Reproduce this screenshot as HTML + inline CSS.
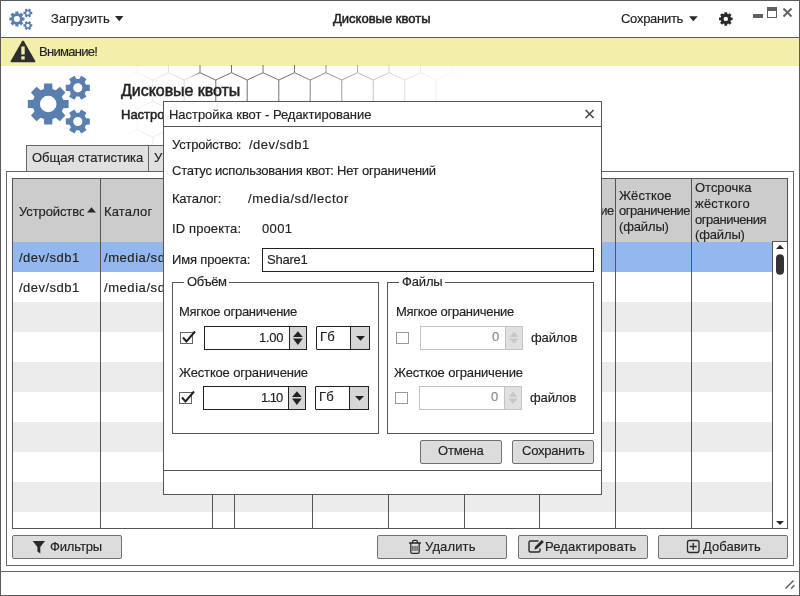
<!DOCTYPE html>
<html><head><meta charset="utf-8"><style>
html,body{margin:0;padding:0;}
body{width:800px;height:596px;position:relative;overflow:hidden;background:#fff;font-family:"Liberation Sans", sans-serif;color:#222;}
.t{position:absolute;white-space:pre;will-change:transform;-webkit-text-stroke:0.15px currentColor;}
.a{position:absolute;box-sizing:border-box;}
.btn{position:absolute;box-sizing:border-box;background:#dcdcdc;border:1px solid #707070;border-radius:2px;}
</style></head><body>
<!-- outer frame -->
<div class="a" style="left:0;top:0;width:800px;height:596px;border:1px solid #5a5a5a;"></div>
<div class="a" style="left:0;top:37px;width:800px;height:1px;background:#5a5a5a;"></div>
<div class="a" style="left:1px;top:38px;width:798px;height:28px;background:#f4eeab;"></div>
<svg class="a" style="left:0;top:0" width="800" height="596" viewBox="0 0 800 596">
  <defs>
    <linearGradient id="fade" gradientUnits="userSpaceOnUse" x1="120" y1="0" x2="470" y2="0">
      <stop offset="0.000" stop-color="#fff" stop-opacity="0"/>
      <stop offset="0.086" stop-color="#fff" stop-opacity="0.1"/>
      <stop offset="0.200" stop-color="#fff" stop-opacity="0.22"/>
      <stop offset="0.229" stop-color="#fff" stop-opacity="0.8"/>
      <stop offset="0.486" stop-color="#fff" stop-opacity="0.8"/>
      <stop offset="0.629" stop-color="#fff" stop-opacity="0.55"/>
      <stop offset="0.743" stop-color="#fff" stop-opacity="0.3"/>
      <stop offset="0.857" stop-color="#fff" stop-opacity="0.1"/>
      <stop offset="0.971" stop-color="#fff" stop-opacity="0.02"/>
      <stop offset="1.000" stop-color="#fff" stop-opacity="0"/>
    </linearGradient>
    <linearGradient id="fadev" x1="0" y1="0" x2="0" y2="1">
      <stop offset="0" stop-color="#fff" stop-opacity="1"/>
      <stop offset="0.4" stop-color="#fff" stop-opacity="0.7"/>
      <stop offset="1" stop-color="#fff" stop-opacity="0.0"/>
    </linearGradient>
    <mask id="m1"><rect x="120" y="65" width="350" height="110" fill="url(#fade)"/></mask>
    <clipPath id="c1"><rect x="120" y="65" width="350" height="106"/></clipPath>
  </defs>
  <g clip-path="url(#c1)" mask="url(#m1)"><path d="M58.2,22.8L74.0,15.5M74.0,15.5L89.8,22.8M58.2,22.8L58.2,44.1M89.8,22.8L105.5,15.5M105.5,15.5L121.2,22.8M89.8,22.8L89.8,44.1M121.2,22.8L137.0,15.5M137.0,15.5L152.8,22.8M121.2,22.8L121.2,44.1M152.8,22.8L168.5,15.5M168.5,15.5L184.2,22.8M152.8,22.8L152.8,44.1M184.2,22.8L200.0,15.5M200.0,15.5L215.8,22.8M184.2,22.8L184.2,44.1M215.8,22.8L231.5,15.5M231.5,15.5L247.2,22.8M215.8,22.8L215.8,44.1M247.2,22.8L263.0,15.5M263.0,15.5L278.8,22.8M247.2,22.8L247.2,44.1M278.8,22.8L294.5,15.5M294.5,15.5L310.2,22.8M278.8,22.8L278.8,44.1M310.2,22.8L326.0,15.5M326.0,15.5L341.8,22.8M310.2,22.8L310.2,44.1M341.8,22.8L357.5,15.5M357.5,15.5L373.2,22.8M341.8,22.8L341.8,44.1M373.2,22.8L389.0,15.5M389.0,15.5L404.8,22.8M373.2,22.8L373.2,44.1M404.8,22.8L420.5,15.5M420.5,15.5L436.2,22.8M404.8,22.8L404.8,44.1M436.2,22.8L452.0,15.5M452.0,15.5L467.8,22.8M436.2,22.8L436.2,44.1M467.8,22.8L483.5,15.5M483.5,15.5L499.2,22.8M467.8,22.8L467.8,44.1M499.2,22.8L515.0,15.5M515.0,15.5L530.8,22.8M499.2,22.8L499.2,44.1M530.8,22.8L546.5,15.5M546.5,15.5L562.2,22.8M530.8,22.8L530.8,44.1M562.2,22.8L578.0,15.5M578.0,15.5L593.8,22.8M562.2,22.8L562.2,44.1M593.8,22.8L609.5,15.5M609.5,15.5L625.2,22.8M593.8,22.8L593.8,44.1M74.0,51.4L89.8,44.1M89.8,44.1L105.5,51.4M74.0,51.4L74.0,72.7M105.5,51.4L121.2,44.1M121.2,44.1L137.0,51.4M105.5,51.4L105.5,72.7M137.0,51.4L152.8,44.1M152.8,44.1L168.5,51.4M137.0,51.4L137.0,72.7M168.5,51.4L184.2,44.1M184.2,44.1L200.0,51.4M168.5,51.4L168.5,72.7M200.0,51.4L215.8,44.1M215.8,44.1L231.5,51.4M200.0,51.4L200.0,72.7M231.5,51.4L247.2,44.1M247.2,44.1L263.0,51.4M231.5,51.4L231.5,72.7M263.0,51.4L278.8,44.1M278.8,44.1L294.5,51.4M263.0,51.4L263.0,72.7M294.5,51.4L310.2,44.1M310.2,44.1L326.0,51.4M294.5,51.4L294.5,72.7M326.0,51.4L341.8,44.1M341.8,44.1L357.5,51.4M326.0,51.4L326.0,72.7M357.5,51.4L373.2,44.1M373.2,44.1L389.0,51.4M357.5,51.4L357.5,72.7M389.0,51.4L404.8,44.1M404.8,44.1L420.5,51.4M389.0,51.4L389.0,72.7M420.5,51.4L436.2,44.1M436.2,44.1L452.0,51.4M420.5,51.4L420.5,72.7M452.0,51.4L467.8,44.1M467.8,44.1L483.5,51.4M452.0,51.4L452.0,72.7M483.5,51.4L499.2,44.1M499.2,44.1L515.0,51.4M483.5,51.4L483.5,72.7M515.0,51.4L530.8,44.1M530.8,44.1L546.5,51.4M515.0,51.4L515.0,72.7M546.5,51.4L562.2,44.1M562.2,44.1L578.0,51.4M546.5,51.4L546.5,72.7M578.0,51.4L593.8,44.1M593.8,44.1L609.5,51.4M578.0,51.4L578.0,72.7M609.5,51.4L625.2,44.1M625.2,44.1L641.0,51.4M609.5,51.4L609.5,72.7M58.2,80.0L74.0,72.7M74.0,72.7L89.8,80.0M58.2,80.0L58.2,101.3M89.8,80.0L105.5,72.7M105.5,72.7L121.2,80.0M89.8,80.0L89.8,101.3M121.2,80.0L137.0,72.7M137.0,72.7L152.8,80.0M121.2,80.0L121.2,101.3M152.8,80.0L168.5,72.7M168.5,72.7L184.2,80.0M152.8,80.0L152.8,101.3M184.2,80.0L200.0,72.7M200.0,72.7L215.8,80.0M184.2,80.0L184.2,101.3M215.8,80.0L231.5,72.7M231.5,72.7L247.2,80.0M215.8,80.0L215.8,101.3M247.2,80.0L263.0,72.7M263.0,72.7L278.8,80.0M247.2,80.0L247.2,101.3M278.8,80.0L294.5,72.7M294.5,72.7L310.2,80.0M278.8,80.0L278.8,101.3M310.2,80.0L326.0,72.7M326.0,72.7L341.8,80.0M310.2,80.0L310.2,101.3M341.8,80.0L357.5,72.7M357.5,72.7L373.2,80.0M341.8,80.0L341.8,101.3M373.2,80.0L389.0,72.7M389.0,72.7L404.8,80.0M373.2,80.0L373.2,101.3M404.8,80.0L420.5,72.7M420.5,72.7L436.2,80.0M404.8,80.0L404.8,101.3M436.2,80.0L452.0,72.7M452.0,72.7L467.8,80.0M436.2,80.0L436.2,101.3M467.8,80.0L483.5,72.7M483.5,72.7L499.2,80.0M467.8,80.0L467.8,101.3M499.2,80.0L515.0,72.7M515.0,72.7L530.8,80.0M499.2,80.0L499.2,101.3M530.8,80.0L546.5,72.7M546.5,72.7L562.2,80.0M530.8,80.0L530.8,101.3M562.2,80.0L578.0,72.7M578.0,72.7L593.8,80.0M562.2,80.0L562.2,101.3M593.8,80.0L609.5,72.7M609.5,72.7L625.2,80.0M593.8,80.0L593.8,101.3M74.0,108.6L89.8,101.3M89.8,101.3L105.5,108.6M74.0,108.6L74.0,129.9M105.5,108.6L121.2,101.3M121.2,101.3L137.0,108.6M105.5,108.6L105.5,129.9M137.0,108.6L152.8,101.3M152.8,101.3L168.5,108.6M137.0,108.6L137.0,129.9M168.5,108.6L184.2,101.3M184.2,101.3L200.0,108.6M168.5,108.6L168.5,129.9M200.0,108.6L215.8,101.3M215.8,101.3L231.5,108.6M200.0,108.6L200.0,129.9M231.5,108.6L247.2,101.3M247.2,101.3L263.0,108.6M231.5,108.6L231.5,129.9M263.0,108.6L278.8,101.3M278.8,101.3L294.5,108.6M263.0,108.6L263.0,129.9M294.5,108.6L310.2,101.3M310.2,101.3L326.0,108.6M294.5,108.6L294.5,129.9M326.0,108.6L341.8,101.3M341.8,101.3L357.5,108.6M326.0,108.6L326.0,129.9M357.5,108.6L373.2,101.3M373.2,101.3L389.0,108.6M357.5,108.6L357.5,129.9M389.0,108.6L404.8,101.3M404.8,101.3L420.5,108.6M389.0,108.6L389.0,129.9M420.5,108.6L436.2,101.3M436.2,101.3L452.0,108.6M420.5,108.6L420.5,129.9M452.0,108.6L467.8,101.3M467.8,101.3L483.5,108.6M452.0,108.6L452.0,129.9M483.5,108.6L499.2,101.3M499.2,101.3L515.0,108.6M483.5,108.6L483.5,129.9M515.0,108.6L530.8,101.3M530.8,101.3L546.5,108.6M515.0,108.6L515.0,129.9M546.5,108.6L562.2,101.3M562.2,101.3L578.0,108.6M546.5,108.6L546.5,129.9M578.0,108.6L593.8,101.3M593.8,101.3L609.5,108.6M578.0,108.6L578.0,129.9M609.5,108.6L625.2,101.3M625.2,101.3L641.0,108.6M609.5,108.6L609.5,129.9M58.2,137.2L74.0,129.9M74.0,129.9L89.8,137.2M58.2,137.2L58.2,158.5M89.8,137.2L105.5,129.9M105.5,129.9L121.2,137.2M89.8,137.2L89.8,158.5M121.2,137.2L137.0,129.9M137.0,129.9L152.8,137.2M121.2,137.2L121.2,158.5M152.8,137.2L168.5,129.9M168.5,129.9L184.2,137.2M152.8,137.2L152.8,158.5M184.2,137.2L200.0,129.9M200.0,129.9L215.8,137.2M184.2,137.2L184.2,158.5M215.8,137.2L231.5,129.9M231.5,129.9L247.2,137.2M215.8,137.2L215.8,158.5M247.2,137.2L263.0,129.9M263.0,129.9L278.8,137.2M247.2,137.2L247.2,158.5M278.8,137.2L294.5,129.9M294.5,129.9L310.2,137.2M278.8,137.2L278.8,158.5M310.2,137.2L326.0,129.9M326.0,129.9L341.8,137.2M310.2,137.2L310.2,158.5M341.8,137.2L357.5,129.9M357.5,129.9L373.2,137.2M341.8,137.2L341.8,158.5M373.2,137.2L389.0,129.9M389.0,129.9L404.8,137.2M373.2,137.2L373.2,158.5M404.8,137.2L420.5,129.9M420.5,129.9L436.2,137.2M404.8,137.2L404.8,158.5M436.2,137.2L452.0,129.9M452.0,129.9L467.8,137.2M436.2,137.2L436.2,158.5M467.8,137.2L483.5,129.9M483.5,129.9L499.2,137.2M467.8,137.2L467.8,158.5M499.2,137.2L515.0,129.9M515.0,129.9L530.8,137.2M499.2,137.2L499.2,158.5M530.8,137.2L546.5,129.9M546.5,129.9L562.2,137.2M530.8,137.2L530.8,158.5M562.2,137.2L578.0,129.9M578.0,129.9L593.8,137.2M562.2,137.2L562.2,158.5M593.8,137.2L609.5,129.9M609.5,129.9L625.2,137.2M593.8,137.2L593.8,158.5M74.0,165.8L89.8,158.5M89.8,158.5L105.5,165.8M74.0,165.8L74.0,187.1M105.5,165.8L121.2,158.5M121.2,158.5L137.0,165.8M105.5,165.8L105.5,187.1M137.0,165.8L152.8,158.5M152.8,158.5L168.5,165.8M137.0,165.8L137.0,187.1M168.5,165.8L184.2,158.5M184.2,158.5L200.0,165.8M168.5,165.8L168.5,187.1M200.0,165.8L215.8,158.5M215.8,158.5L231.5,165.8M200.0,165.8L200.0,187.1M231.5,165.8L247.2,158.5M247.2,158.5L263.0,165.8M231.5,165.8L231.5,187.1M263.0,165.8L278.8,158.5M278.8,158.5L294.5,165.8M263.0,165.8L263.0,187.1M294.5,165.8L310.2,158.5M310.2,158.5L326.0,165.8M294.5,165.8L294.5,187.1M326.0,165.8L341.8,158.5M341.8,158.5L357.5,165.8M326.0,165.8L326.0,187.1M357.5,165.8L373.2,158.5M373.2,158.5L389.0,165.8M357.5,165.8L357.5,187.1M389.0,165.8L404.8,158.5M404.8,158.5L420.5,165.8M389.0,165.8L389.0,187.1M420.5,165.8L436.2,158.5M436.2,158.5L452.0,165.8M420.5,165.8L420.5,187.1M452.0,165.8L467.8,158.5M467.8,158.5L483.5,165.8M452.0,165.8L452.0,187.1M483.5,165.8L499.2,158.5M499.2,158.5L515.0,165.8M483.5,165.8L483.5,187.1M515.0,165.8L530.8,158.5M530.8,158.5L546.5,165.8M515.0,165.8L515.0,187.1M546.5,165.8L562.2,158.5M562.2,158.5L578.0,165.8M546.5,165.8L546.5,187.1M578.0,165.8L593.8,158.5M593.8,158.5L609.5,165.8M578.0,165.8L578.0,187.1M609.5,165.8L625.2,158.5M625.2,158.5L641.0,165.8M609.5,165.8L609.5,187.1" stroke="#3a3a3a" stroke-width="0.9" fill="none"/></g>
  <g fill="#5a7fae"><path d="M22.45,17.40 L24.45,17.51 L24.45,20.49 L22.45,20.60 L21.95,21.79 L23.29,23.29 L21.19,25.39 L19.69,24.05 L18.50,24.55 L18.39,26.55 L15.41,26.55 L15.30,24.55 L14.11,24.05 L12.61,25.39 L10.51,23.29 L11.85,21.79 L11.35,20.60 L9.35,20.49 L9.35,17.51 L11.35,17.40 L11.85,16.21 L10.51,14.71 L12.61,12.61 L14.11,13.95 L15.30,13.45 L15.41,11.45 L18.39,11.45 L18.50,13.45 L19.69,13.95 L21.19,12.61 L23.29,14.71 L21.95,16.21Z M19.97,19.00 A3.07,3.07 0 1,0 13.83,19.00 A3.07,3.07 0 1,0 19.97,19.00Z" fill-rule="evenodd"/><path d="M30.94,11.84 L32.30,11.87 L32.30,14.15 L30.94,14.17 L30.41,15.10 L31.06,16.28 L29.09,17.42 L28.39,16.27 L27.32,16.27 L26.62,17.42 L24.64,16.28 L25.30,15.10 L24.76,14.17 L23.41,14.15 L23.41,11.87 L24.76,11.84 L25.30,10.91 L24.64,9.73 L26.62,8.59 L27.32,9.75 L28.39,9.75 L29.09,8.59 L31.06,9.73 L30.41,10.91Z M29.55,13.01 A1.70,1.70 0 1,0 26.15,13.01 A1.70,1.70 0 1,0 29.55,13.01Z" fill-rule="evenodd"/><path d="M30.94,24.31 L32.30,24.33 L32.30,26.62 L30.94,26.64 L30.41,27.57 L31.06,28.75 L29.09,29.89 L28.39,28.73 L27.32,28.73 L26.62,29.89 L24.64,28.75 L25.30,27.57 L24.76,26.64 L23.41,26.62 L23.41,24.33 L24.76,24.31 L25.30,23.38 L24.64,22.20 L26.62,21.06 L27.32,22.22 L28.39,22.22 L29.09,21.06 L31.06,22.20 L30.41,23.38Z M29.55,25.48 A1.70,1.70 0 1,0 26.15,25.48 A1.70,1.70 0 1,0 29.55,25.48Z" fill-rule="evenodd"/></g>
  <g fill="#5a7fae"><path d="M63.19,99.69 L68.61,99.97 L68.61,108.03 L63.19,108.31 L61.85,111.55 L65.48,115.58 L59.78,121.28 L55.75,117.65 L52.51,118.99 L52.23,124.41 L44.17,124.41 L43.89,118.99 L40.65,117.65 L36.62,121.28 L30.92,115.58 L34.55,111.55 L33.21,108.31 L27.79,108.03 L27.79,99.97 L33.21,99.69 L34.55,96.45 L30.92,92.42 L36.62,86.72 L40.65,90.35 L43.89,89.01 L44.17,83.59 L52.23,83.59 L52.51,89.01 L55.75,90.35 L59.78,86.72 L65.48,92.42 L61.85,96.45Z M56.50,104.00 A8.30,8.30 0 1,0 39.90,104.00 A8.30,8.30 0 1,0 56.50,104.00Z" fill-rule="evenodd"/><path d="M86.15,84.64 L89.81,84.72 L89.81,90.88 L86.15,90.96 L84.71,93.45 L86.48,96.66 L81.13,99.74 L79.24,96.61 L76.36,96.61 L74.47,99.74 L69.12,96.66 L70.89,93.45 L69.45,90.96 L65.79,90.88 L65.79,84.72 L69.45,84.64 L70.89,82.15 L69.12,78.94 L74.47,75.86 L76.36,78.99 L79.24,78.99 L81.13,75.86 L86.48,78.94 L84.71,82.15Z M82.40,87.80 A4.60,4.60 0 1,0 73.20,87.80 A4.60,4.60 0 1,0 82.40,87.80Z" fill-rule="evenodd"/><path d="M86.15,118.34 L89.81,118.42 L89.81,124.58 L86.15,124.66 L84.71,127.15 L86.48,130.36 L81.13,133.44 L79.24,130.31 L76.36,130.31 L74.47,133.44 L69.12,130.36 L70.89,127.15 L69.45,124.66 L65.79,124.58 L65.79,118.42 L69.45,118.34 L70.89,115.85 L69.12,112.64 L74.47,109.56 L76.36,112.69 L79.24,112.69 L81.13,109.56 L86.48,112.64 L84.71,115.85Z M82.40,121.50 A4.60,4.60 0 1,0 73.20,121.50 A4.60,4.60 0 1,0 82.40,121.50Z" fill-rule="evenodd"/></g>
  <path d="M730.84,17.45 L732.57,17.56 L732.57,20.24 L730.84,20.35 L730.39,21.44 L731.53,22.74 L729.64,24.63 L728.34,23.49 L727.25,23.94 L727.14,25.67 L724.46,25.67 L724.35,23.94 L723.26,23.49 L721.96,24.63 L720.07,22.74 L721.21,21.44 L720.76,20.35 L719.03,20.24 L719.03,17.56 L720.76,17.45 L721.21,16.36 L720.07,15.06 L721.96,13.17 L723.26,14.31 L724.35,13.86 L724.46,12.13 L727.14,12.13 L727.25,13.86 L728.34,14.31 L729.64,13.17 L731.53,15.06 L730.39,16.36Z M728.00,18.90 A2.20,2.20 0 1,0 723.60,18.90 A2.20,2.20 0 1,0 728.00,18.90Z" fill="#2a2a2a" fill-rule="evenodd"/>
  <!-- warning triangle -->
  <path d="M22,41.2 Q23,39.8 24,41.2 L35.3,61 Q35.9,62.3 34.5,62.3 L11.5,62.3 Q10.1,62.3 10.7,61 Z" fill="#2e2e2e"/>
  <rect x="21.3" y="46.5" width="3.4" height="8" fill="#f4eeab"/>
  <rect x="21.3" y="56.3" width="3.4" height="3.2" fill="#f4eeab"/>
  <!-- dropdown triangles -->
  <path d="M115,16 L123.5,16 L119.25,21.2Z" fill="#2a2a2a"/>
  <path d="M689,16.2 L697.7,16.2 L693.35,21.2Z" fill="#2a2a2a"/>
  <!-- window controls -->
  <rect x="753" y="14" width="10" height="4" fill="#606060"/>
  <rect x="767.5" y="7.5" width="9" height="10" fill="none" stroke="#606060" stroke-width="1"/>
  <rect x="767" y="7" width="10" height="4" fill="#606060"/>
  <path d="M783.5,8.5 L791.5,16.5 M791.5,8.5 L783.5,16.5" stroke="#606060" stroke-width="1.8"/>
</svg>
<!-- tab -->
<div class="a" style="left:26px;top:145px;width:123px;height:27px;background:#e0e0e0;border:1px solid #666;"></div>
<div class="a" style="left:148px;top:145px;width:60px;height:27px;background:#e0e0e0;border:1px solid #666;"></div>
<!-- panel -->
<div class="a" style="left:6px;top:171px;width:788px;height:395px;border:1px solid #666;background:#fff;"></div>
<!-- table -->
<div class="a" style="left:12px;top:178px;width:776px;height:351px;border:1px solid #555;background:#fff;overflow:hidden;">
  <div class="a" style="left:0;top:0;width:774px;height:63px;background:#cccccc;"></div>
  <div class="a" style="left:0;top:63px;width:774px;height:30px;background:#93b8ef;"></div>
  <div class="a" style="left:0;top:123px;width:759px;height:30px;background:#ececec;"></div>
  <div class="a" style="left:0;top:183px;width:759px;height:30px;background:#ececec;"></div>
  <div class="a" style="left:0;top:243px;width:759px;height:30px;background:#ececec;"></div>
  <div class="a" style="left:0;top:303px;width:759px;height:30px;background:#ececec;"></div>
</div>
<!-- column lines -->
<div class="a" style="left:100px;top:179px;width:1px;height:349px;background:#555;"></div>
<div class="a" style="left:212px;top:179px;width:1px;height:349px;background:#555;"></div>
<div class="a" style="left:234px;top:179px;width:1px;height:349px;background:#555;"></div>
<div class="a" style="left:312px;top:179px;width:1px;height:349px;background:#555;"></div>
<div class="a" style="left:388px;top:179px;width:1px;height:349px;background:#555;"></div>
<div class="a" style="left:464px;top:179px;width:1px;height:349px;background:#555;"></div>
<div class="a" style="left:539px;top:179px;width:1px;height:349px;background:#555;"></div>
<div class="a" style="left:615px;top:179px;width:1px;height:349px;background:#555;"></div>
<div class="a" style="left:691px;top:179px;width:1px;height:349px;background:#555;"></div>
<!-- scrollbar -->
<div class="a" style="left:772px;top:241px;width:16px;height:288px;border:1px solid #555;background:#fff;"></div>
<svg class="a" style="left:0;top:0" width="800" height="596">
  <path d="M776,249 L784,249 L780,244.8Z" fill="#2a2a2a"/>
  <rect x="776" y="254.2" width="8" height="20.6" rx="4" fill="#333"/>
  <path d="M776,521 L784,521 L780,525Z" fill="#2a2a2a"/>
  <path d="M87,212.6 L96,212.6 L91.5,207.2Z" fill="#2a2a2a"/>
</svg>
<!-- status bar -->
<div class="a" style="left:0;top:571px;width:800px;height:1px;background:#666;"></div>
<svg class="a" style="left:0;top:0" width="800" height="596">
  <path d="M785.5,588.5 L793.5,580.5 M791.2,588.5 L794.5,585.2" stroke="#555" stroke-width="1.3"/>
</svg>
<!-- buttons -->
<div class="btn" style="left:12px;top:535px;width:110px;height:24px;"></div>
<div class="btn" style="left:377px;top:535px;width:130px;height:24px;"></div>
<div class="btn" style="left:518px;top:535px;width:130px;height:24px;"></div>
<div class="btn" style="left:658px;top:535px;width:130px;height:24px;"></div>
<svg class="a" style="left:0;top:0" width="800" height="596">
  <!-- funnel -->
  <path d="M32.7,541 L45,541 L40.3,547 L40.3,553.4 L37.4,551.5 L37.4,547 Z" fill="#2a2a2a"/>
  <!-- trash -->
  <g stroke="#2a2a2a" stroke-width="1.3" fill="none" stroke-linecap="round">
    <path d="M409.5,543 L420.5,543"/>
    <path d="M412.6,542.8 L412.6,541.6 Q412.6,540.3 413.9,540.3 L416.1,540.3 Q417.4,540.3 417.4,541.6 L417.4,542.8"/>
    <path d="M410.8,543.5 L410.8,552 Q410.8,553.3 412.1,553.3 L417.9,553.3 Q419.2,553.3 419.2,552 L419.2,543.5"/>
    <path d="M412.9,546.3 L412.9,550.5 M415,546.3 L415,550.5 M417.1,546.3 L417.1,550.5" stroke-width="1"/>
  </g>
  <!-- edit -->
  <path d="M538.5,541 L530.5,541 Q529,541 529,542.5 L529,550.5 Q529,552 530.5,552 L538.5,552 Q540,552 540,550.5 L540,548.5" stroke="#2a2a2a" stroke-width="1.4" fill="none"/>
  <path d="M541.8,540 L543.8,542 L537.3,548.5 L534.3,549.8 L535.3,546.5 Z" fill="#2a2a2a"/>
  <!-- plus box -->
  <rect x="687.5" y="540.5" width="11.5" height="12" rx="2" fill="none" stroke="#2a2a2a" stroke-width="1.3"/>
  <path d="M693.25,543 L693.25,550 M689.8,546.5 L696.7,546.5" stroke="#2a2a2a" stroke-width="1.3"/>
</svg>
<!-- header clip for first col text -->
<div class="a" style="left:13px;top:179px;width:71px;height:62px;overflow:hidden;">
  <div class="t" style="left:5.70px;top:25.70px;font-size:13px;line-height:13px;letter-spacing:-0.1px;">Устройство</div>
</div>
<div class="t" style="left:50.70px;top:11.50px;font-size:13px;line-height:13px;letter-spacing:-0.084px;">Загрузить</div>
<div class="t" style="left:333.40px;top:12.20px;font-size:13px;line-height:13px;-webkit-text-stroke:0.5px #222;letter-spacing:0.013px;">Дисковые квоты</div>
<div class="t" style="left:620.90px;top:11.70px;font-size:13px;line-height:13px;letter-spacing:-0.279px;">Сохранить</div>
<div class="t" style="left:38.95px;top:44.60px;font-size:13px;line-height:13px;letter-spacing:-0.718px;">Внимание!</div>
<div class="t" style="left:120.92px;top:82.86px;font-size:16px;line-height:16px;-webkit-text-stroke:0.5px #222;letter-spacing:-0.044px;">Дисковые квоты</div>
<div class="t" style="left:121.20px;top:107.60px;font-size:13px;line-height:13px;-webkit-text-stroke:0.5px #222;">Настройка квот</div>
<div class="t" style="left:31.50px;top:151.20px;font-size:13px;line-height:13px;letter-spacing:-0.014px;">Общая статистика</div>
<div class="t" style="left:153.70px;top:151.20px;font-size:13px;line-height:13px;">У</div>
<div class="t" style="left:103.70px;top:205.00px;font-size:13px;line-height:13px;letter-spacing:0.162px;">Каталог</div>
<div class="t" style="left:543.20px;top:204.20px;font-size:13px;line-height:13px;letter-spacing:-0.541px;">ограничение</div>
<div class="t" style="left:618.90px;top:188.70px;font-size:13px;line-height:13px;letter-spacing:0.088px;">Жёсткое</div>
<div class="t" style="left:618.90px;top:204.20px;font-size:13px;line-height:13px;letter-spacing:-0.495px;">ограничение</div>
<div class="t" style="left:618.90px;top:219.70px;font-size:13px;line-height:13px;letter-spacing:-0.140px;">(файлы)</div>
<div class="t" style="left:694.90px;top:180.60px;font-size:13px;line-height:13px;letter-spacing:-0.022px;">Отсрочка</div>
<div class="t" style="left:694.90px;top:196.50px;font-size:13px;line-height:13px;letter-spacing:0.220px;">жёсткого</div>
<div class="t" style="left:694.90px;top:212.50px;font-size:13px;line-height:13px;letter-spacing:-0.478px;">ограничения</div>
<div class="t" style="left:694.90px;top:228.00px;font-size:13px;line-height:13px;letter-spacing:-0.140px;">(файлы)</div>
<div class="t" style="left:18.95px;top:250.60px;font-size:13px;line-height:13px;letter-spacing:0.469px;">/dev/sdb1</div>
<div class="t" style="left:103.70px;top:250.60px;font-size:13px;line-height:13px;letter-spacing:0.565px;">/media/sd/lector</div>
<div class="t" style="left:18.95px;top:280.60px;font-size:13px;line-height:13px;letter-spacing:0.469px;">/dev/sdb1</div>
<div class="t" style="left:103.70px;top:280.60px;font-size:13px;line-height:13px;letter-spacing:0.565px;">/media/sd/lector</div>
<div class="t" style="left:49.95px;top:539.75px;font-size:13px;line-height:13px;letter-spacing:-0.138px;">Фильтры</div>
<div class="t" style="left:425.20px;top:539.75px;font-size:13px;line-height:13px;letter-spacing:0.137px;">Удалить</div>
<div class="t" style="left:545.40px;top:539.75px;font-size:13px;line-height:13px;letter-spacing:0.130px;">Редактировать</div>
<div class="t" style="left:703.10px;top:539.75px;font-size:13px;line-height:13px;letter-spacing:0.031px;">Добавить</div>
<!-- dialog -->
<div class="a" style="left:163px;top:101px;width:439px;height:394px;border:1px solid #555;background:#fff;"></div>
<div class="a" style="left:164px;top:126px;width:437px;height:1px;background:#555;"></div>
<div class="a" style="left:164px;top:470px;width:437px;height:1px;background:#555;"></div>
<svg class="a" style="left:0;top:0" width="800" height="596">
  <path d="M585.6,110 L593.6,118 M593.6,110 L585.6,118" stroke="#4a4a4a" stroke-width="1.7"/>
</svg>
<div class="a" style="left:262px;top:248px;width:332px;height:24px;border:1px solid #222;"></div>
<!-- group boxes -->
<div class="a" style="left:172px;top:282px;width:207px;height:152px;border:1px solid #555;"></div>
<div class="a" style="left:184px;top:278px;width:45px;height:8px;background:#fff;"></div>
<div class="a" style="left:387px;top:282px;width:207px;height:152px;border:1px solid #555;"></div>
<div class="a" style="left:399px;top:278px;width:46px;height:8px;background:#fff;"></div>
<!-- spinboxes -->
<div class="a" style="left:204px;top:326px;width:103px;height:24px;border:1px solid #222;background:#fff;"></div>
<div class="a" style="left:289px;top:326px;width:18px;height:24px;border:1px solid #222;background:#d6d6d6;"></div>
<div class="a" style="left:316px;top:326px;width:54px;height:24px;border:1px solid #222;border-radius:1px;background:#fff;"></div>
<div class="a" style="left:350px;top:326px;width:20px;height:24px;border:1px solid #222;background:#d6d6d6;"></div>
<div class="a" style="left:203px;top:386px;width:103px;height:24px;border:1px solid #222;background:#fff;"></div>
<div class="a" style="left:288px;top:386px;width:18px;height:24px;border:1px solid #222;background:#d6d6d6;"></div>
<div class="a" style="left:315px;top:386px;width:54px;height:24px;border:1px solid #222;border-radius:1px;background:#fff;"></div>
<div class="a" style="left:349px;top:386px;width:20px;height:24px;border:1px solid #222;background:#d6d6d6;"></div>
<div class="a" style="left:420px;top:326px;width:103px;height:24px;border:1px solid #c4c4c4;background:#fff;"></div>
<div class="a" style="left:505px;top:326px;width:18px;height:24px;border:1px solid #c4c4c4;background:#e0e0e0;"></div>
<div class="a" style="left:419px;top:386px;width:103px;height:24px;border:1px solid #c4c4c4;background:#fff;"></div>
<div class="a" style="left:504px;top:386px;width:18px;height:24px;border:1px solid #c4c4c4;background:#e0e0e0;"></div>
<!-- checkboxes -->
<div class="a" style="left:180px;top:332px;width:13px;height:12px;border:1px solid #666;"></div>
<div class="a" style="left:179px;top:392px;width:13px;height:12px;border:1px solid #666;"></div>
<div class="a" style="left:396px;top:332px;width:13px;height:12px;border:1px solid #999;"></div>
<div class="a" style="left:395px;top:392px;width:13px;height:12px;border:1px solid #999;"></div>
<svg class="a" style="left:0;top:0" width="800" height="596">
  <path d="M183,337.5 L186.5,341.5 L195,331.5" stroke="#222" stroke-width="2" fill="none"/>
  <path d="M182,397.5 L185.5,401.5 L194,391.5" stroke="#222" stroke-width="2" fill="none"/>
  <path d="M293,337 L302.8,337 L297.9,331.2Z M293,338.4 L302.8,338.4 L297.9,345Z" fill="#222"/>
  <path d="M292,397 L301.8,397 L296.9,391.2Z M292,398.4 L301.8,398.4 L296.9,405Z" fill="#222"/>
  <path d="M356,336 L365,336 L360.5,340.7Z" fill="#222"/>
  <path d="M355,396 L364,396 L359.5,400.7Z" fill="#222"/>
  <path d="M509.5,337 L518.5,337 L514,331.5Z M509.5,338.5 L518.5,338.5 L514,344Z" fill="#c8c8c8"/>
  <path d="M508.5,397 L517.5,397 L513,391.5Z M508.5,398.5 L517.5,398.5 L513,404Z" fill="#c8c8c8"/>
</svg>
<div class="btn" style="left:420px;top:440px;width:82px;height:24px;"></div>
<div class="btn" style="left:512px;top:440px;width:82px;height:24px;"></div>
<div class="t" style="left:168.80px;top:108.20px;font-size:13px;line-height:13px;letter-spacing:-0.037px;">Настройка квот - Редактирование</div>
<div class="t" style="left:171.60px;top:137.60px;font-size:13px;line-height:13px;letter-spacing:-0.220px;">Устройство:</div>
<div class="t" style="left:248.60px;top:137.60px;font-size:13px;line-height:13px;letter-spacing:0.481px;">/dev/sdb1</div>
<div class="t" style="left:171.60px;top:163.70px;font-size:13px;line-height:13px;letter-spacing:-0.237px;">Статус использования квот: Нет ограничений</div>
<div class="t" style="left:171.60px;top:192.40px;font-size:13px;line-height:13px;letter-spacing:-0.209px;">Каталог:</div>
<div class="t" style="left:247.80px;top:192.40px;font-size:13px;line-height:13px;letter-spacing:0.565px;">/media/sd/lector</div>
<div class="t" style="left:171.60px;top:222.00px;font-size:13px;line-height:13px;letter-spacing:0.125px;">ID проекта:</div>
<div class="t" style="left:261.80px;top:222.00px;font-size:13px;line-height:13px;letter-spacing:0.395px;">0001</div>
<div class="t" style="left:171.60px;top:252.90px;font-size:13px;line-height:13px;letter-spacing:-0.163px;">Имя проекта:</div>
<div class="t" style="left:266.70px;top:252.90px;font-size:13px;line-height:13px;letter-spacing:-0.237px;">Share1</div>
<div class="t" style="left:186.70px;top:274.75px;font-size:13px;line-height:13px;letter-spacing:-0.344px;">Объём</div>
<div class="t" style="left:179.30px;top:305.00px;font-size:13px;line-height:13px;letter-spacing:-0.281px;">Мягкое ограничение</div>
<div class="t" style="left:259.20px;top:330.60px;font-size:13px;line-height:13px;letter-spacing:-0.278px;">1.00</div>
<div class="t" style="left:319.70px;top:330.30px;font-size:13px;line-height:13px;letter-spacing:0.300px;">Гб</div>
<div class="t" style="left:178.50px;top:366.00px;font-size:13px;line-height:13px;letter-spacing:-0.162px;">Жесткое ограничение</div>
<div class="t" style="left:260.60px;top:390.60px;font-size:13px;line-height:13px;letter-spacing:-1.003px;">1.10</div>
<div class="t" style="left:318.70px;top:390.30px;font-size:13px;line-height:13px;letter-spacing:0.300px;">Гб</div>
<div class="t" style="left:401.80px;top:274.75px;font-size:13px;line-height:13px;letter-spacing:-0.163px;">Файлы</div>
<div class="t" style="left:395.70px;top:305.00px;font-size:13px;line-height:13px;letter-spacing:-0.281px;">Мягкое ограничение</div>
<div class="t" style="right:300.90px;top:330.30px;font-size:13px;line-height:13px;color:#888;">0</div>
<div class="t" style="left:531.20px;top:330.80px;font-size:13px;line-height:13px;letter-spacing:-0.144px;">файлов</div>
<div class="t" style="left:394.30px;top:365.50px;font-size:13px;line-height:13px;letter-spacing:-0.162px;">Жесткое ограничение</div>
<div class="t" style="right:301.70px;top:390.30px;font-size:13px;line-height:13px;color:#888;">0</div>
<div class="t" style="left:529.90px;top:390.80px;font-size:13px;line-height:13px;letter-spacing:-0.144px;">файлов</div>
<div class="t" style="left:438.30px;top:444.40px;font-size:13px;line-height:13px;letter-spacing:-0.176px;">Отмена</div>
<div class="t" style="left:521.70px;top:444.40px;font-size:13px;line-height:13px;letter-spacing:-0.223px;">Сохранить</div>
</body></html>
